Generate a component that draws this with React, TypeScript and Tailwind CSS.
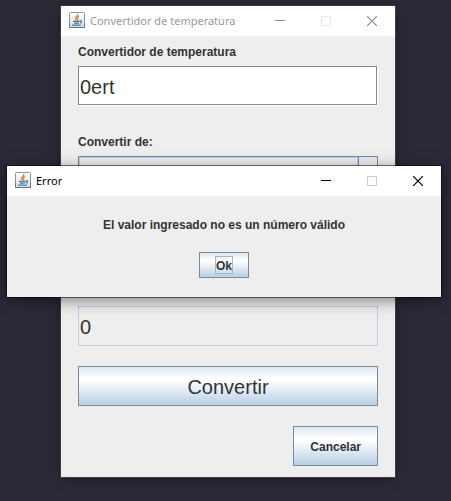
import { useState } from "react";
import type { ReactNode } from "react";

const metal =
  "border border-[#7a8a99] bg-[linear-gradient(#dde8f3_0%,#ffffff_30%,#ffffff_35%,#b8cfe5_100%)] text-[#333333]";

function JavaIcon() {
  return (
    <svg viewBox="0 0 16 16" className="size-4 shrink-0" aria-hidden="true">
      <defs>
        <linearGradient id="tile" x1="0" y1="0" x2="0" y2="1">
          <stop offset="0" stopColor="#ffffff" />
          <stop offset="1" stopColor="#d3dde4" />
        </linearGradient>
      </defs>
      <rect x="0.5" y="0.5" width="15" height="15" rx="1" fill="url(#tile)" stroke="#8399a8" />
      <path d="M0.5 11V15.5H15.5V11" fill="none" stroke="#5d7688" />
      <path d="M8.6 2C9.8 4 5.9 4.8 6.5 6.6c.3.7 1 1 1.1 1.8M10 4.4C8.2 5.2 7.8 6 8.6 6.9c.5.6.2 1-.4 1.6" fill="none" stroke="#e58a3c" strokeWidth="1.4" />
      <path d="M4 9.3H10.6M5 11.2H10M10.8 8.8c2.3-.6 2.4 1.8.2 2.3M3.2 13.2H11.8" fill="none" stroke="#4f7896" strokeWidth="1.2" />
    </svg>
  );
}

function TitleBar({ title, active }: { title: string; active: boolean }) {
  const stroke = active ? "#000000" : "#8c8c8c";
  const muted = active ? "#cccccc" : "#e8e8e8";
  const control = "flex w-[46px] items-center justify-center";
  return (
    <header className="flex h-[30px] items-stretch bg-white">
      <div className="flex min-w-0 flex-1 items-start gap-[5px] pt-1.5 pl-2">
        <JavaIcon />
        <h1
          className={`truncate font-['Noto_Sans',sans-serif] text-[11px] leading-[18px] ${active ? "text-black" : "text-[#999999]"}`}
        >
          {title}
        </h1>
      </div>
      <button type="button" aria-label="Minimizar" className={control}>
        <svg width="10" height="10" viewBox="0 0 10 10">
          <path d="M0 4.5H10" stroke={stroke} />
        </svg>
      </button>
      <button type="button" aria-label="Maximizar" disabled className={control}>
        <svg width="10" height="10" viewBox="0 0 10 10">
          <path d="M.5.5H9.5V9.5H.5Z" fill="none" stroke={muted} />
        </svg>
      </button>
      <button type="button" aria-label="Cerrar" className={control}>
        <svg width="10" height="10" viewBox="0 0 10 10">
          <path d="M0 0L10 10M10 0L0 10" stroke={stroke} strokeWidth="1.2" />
        </svg>
      </button>
    </header>
  );
}

function Label({ htmlFor, children }: { htmlFor: string; children: ReactNode }) {
  return (
    <label htmlFor={htmlFor} className="block h-5 text-xs leading-5 font-bold">
      {children}
    </label>
  );
}

function ComboBox({ id, label }: { id: string; label?: string }) {
  return (
    <div className={`flex h-10 ${metal}`}>
      <select
        id={id}
        aria-label={label}
        className="min-w-0 flex-1 appearance-none border border-[#b8cfe5] bg-[#eeeeee] text-xl"
      />
      <span className="w-[19px] border-l border-[#7a8a99]" />
    </div>
  );
}

export default function App() {
  const [value, setValue] = useState("0ert");
  return (
    <main className="relative min-h-screen bg-[#292a36] pt-1.5 pr-14 pb-6 pl-[61px] font-['Liberation_Sans',Arial,sans-serif] text-[#333333]">
      <section className="bg-[#eeeeee] shadow-[0_0_0_1px_#3b3b43,0_2px_12px_rgba(0,0,0,0.35)]">
        <TitleBar title="Convertidor de temperatura" active={false} />
        <form className="px-[17px] pt-1.5 pb-[11px]" onSubmit={(e) => e.preventDefault()}>
          <Label htmlFor="valor">Convertidor de temperatura</Label>
          <div className="mt-1 h-10 border-r border-b border-white">
            <input
              id="valor"
              value={value}
              onChange={(e) => setValue(e.target.value)}
              className="block h-full w-full border border-[#7a8a99] bg-white px-px pt-1 text-xl outline-none"
            />
          </div>
          <div className="mt-[26px]">
            <Label htmlFor="origen">Convertir de:</Label>
          </div>
          <div className="mt-1">
            <ComboBox id="origen" />
          </div>
          <div className="mt-[50px]">
            <ComboBox id="destino" label="Unidad de destino" />
          </div>
          <input
            aria-label="Resultado"
            readOnly
            value="0"
            className="mt-5 block h-10 w-full border border-[#b8cfe5] bg-[#eeeeee] px-px pt-0.5 text-xl outline-none"
          />
          <button type="submit" className={`mt-5 block h-10 w-full pt-0.5 text-xl ${metal}`}>
            Convertir
          </button>
          <div className="mt-5 flex justify-end">
            <button type="button" className={`h-10 px-4 pt-0.5 text-xs font-bold ${metal}`}>
              Cancelar
            </button>
          </div>
        </form>
      </section>

      <section
        role="dialog"
        aria-label="Error"
        className="absolute top-[166px] right-2.5 left-[7px] bg-[#eeeeee] shadow-[0_0_0_1px_rgba(0,0,0,0.5),0_3px_14px_rgba(0,0,0,0.5)]"
      >
        <TitleBar title="Error" active />
        <div className="flex flex-col items-center px-4 pt-[19px] pb-[19px]">
          <p className="text-xs leading-5 font-bold">El valor ingresado no es un número válido</p>
          <button
            type="button"
            className={`mt-[17px] flex h-[26px] w-[50px] items-center justify-center text-xs font-bold ${metal}`}
          >
            <span className="border border-[#a3b8cc] pt-0.5 leading-[14px]">Ok</span>
          </button>
        </div>
      </section>
    </main>
  );
}
